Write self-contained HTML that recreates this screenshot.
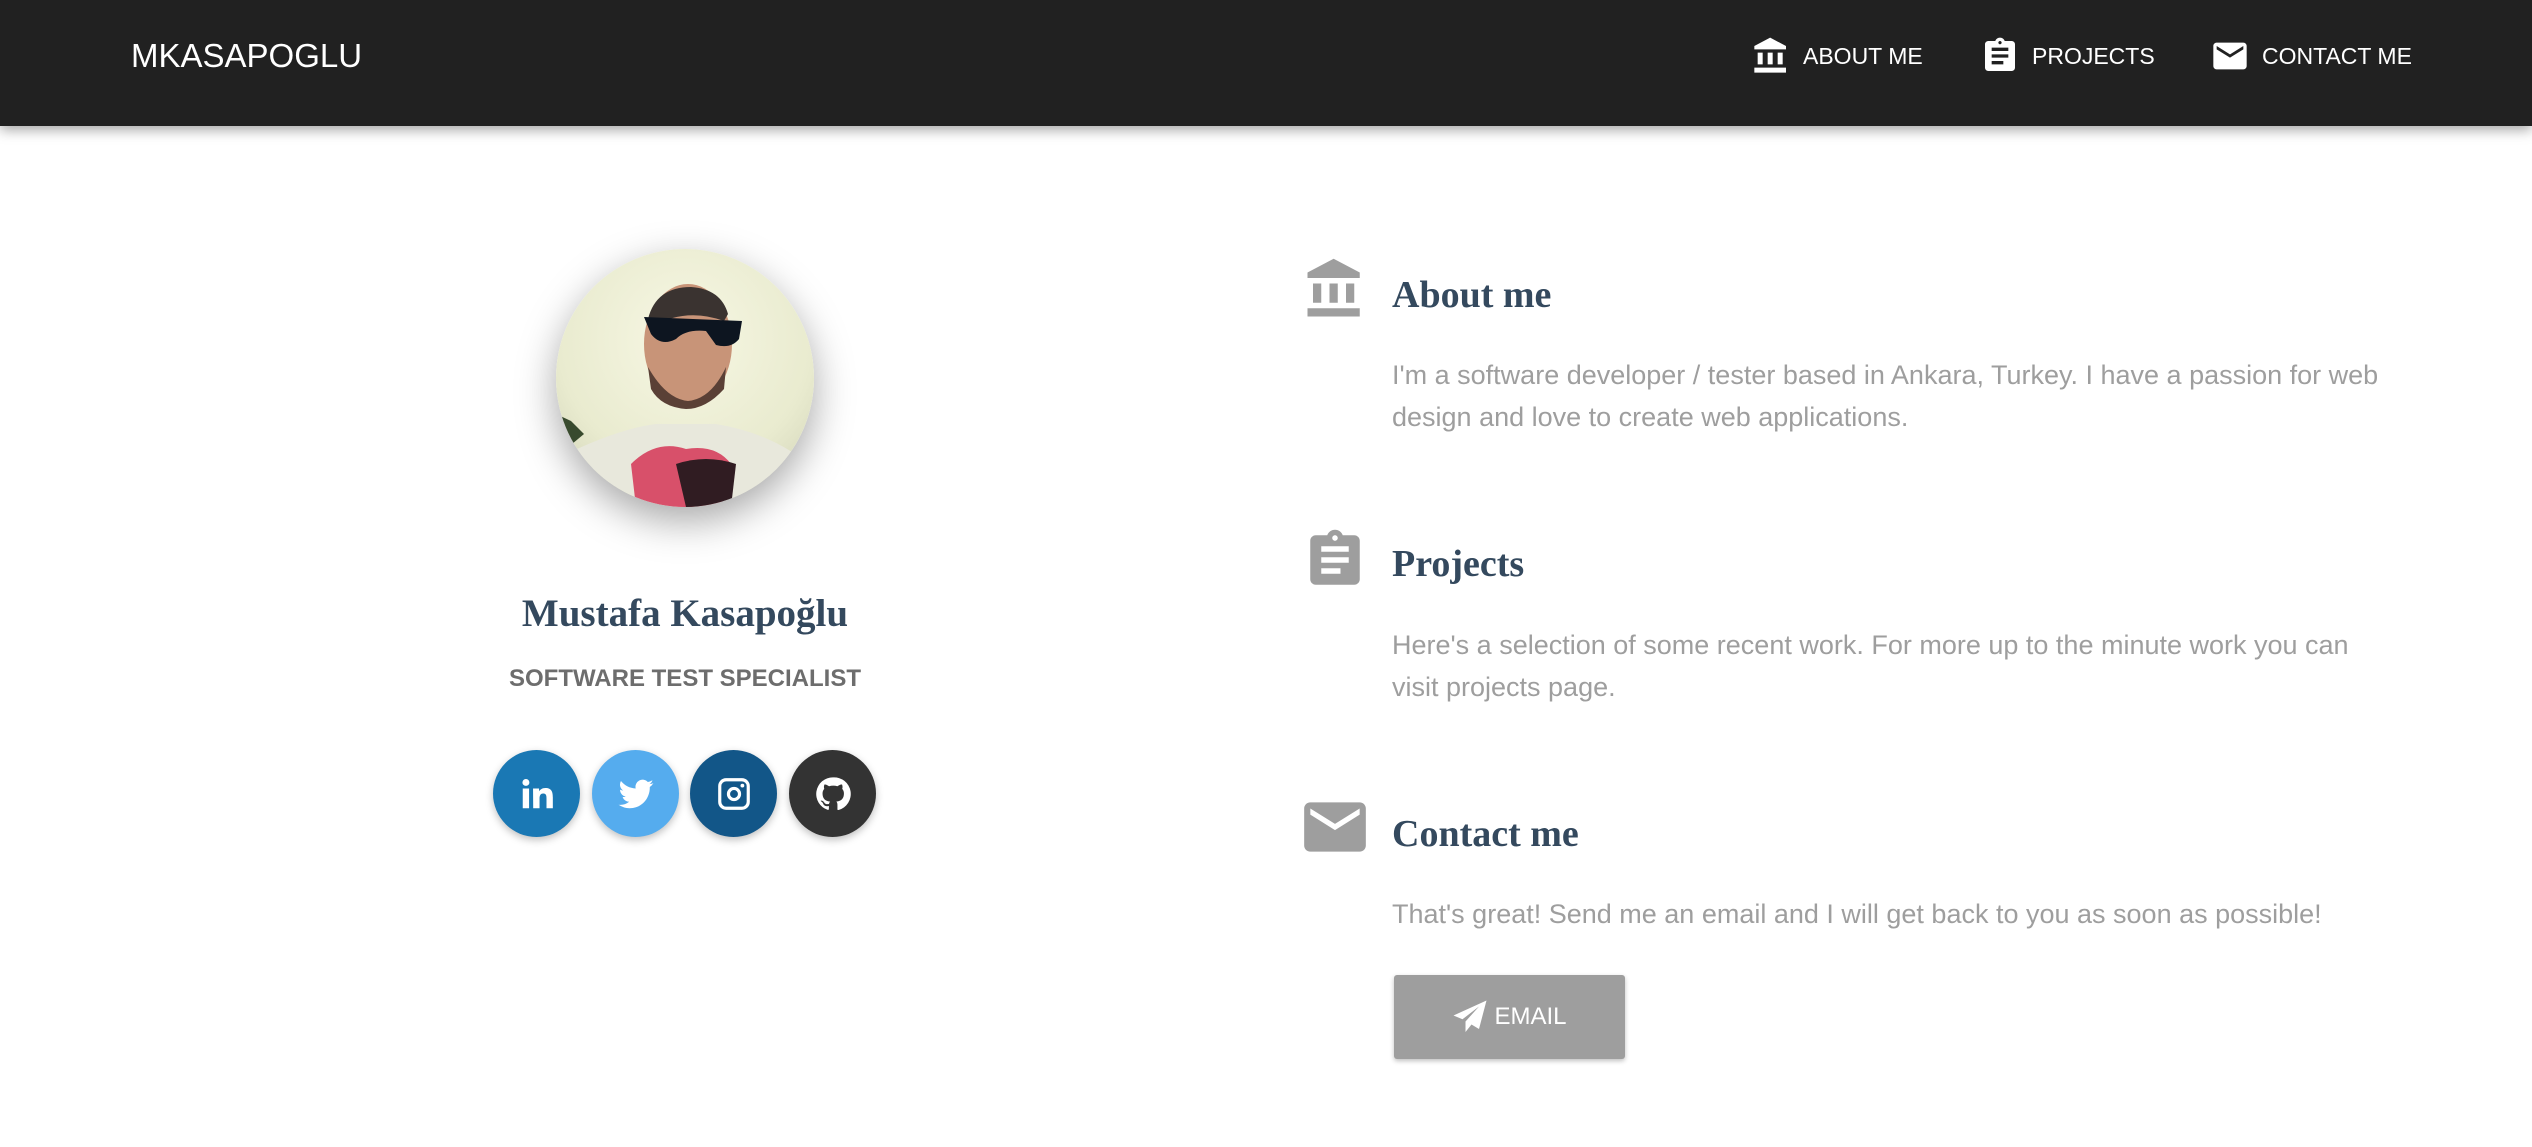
<!DOCTYPE html>
<html><head><meta charset="utf-8"><style>
*{margin:0;padding:0;box-sizing:border-box}
body{width:2532px;height:1147px;background:#fff;font-family:"Liberation Sans",sans-serif;position:relative;overflow:hidden}
.nav{position:absolute;left:0;top:0;width:2532px;height:126px;background:#212121;box-shadow:0 4px 12px rgba(0,0,0,.35)}
.logo{position:absolute;left:131px;top:37px;font-size:33px;color:#fff;font-weight:300;letter-spacing:0}
.ni{position:absolute;top:36px;color:#fff;font-size:23px;display:flex;align-items:center;height:40px}
.ni svg{width:40px;height:40px;margin-right:12px;fill:#fff}
.avatar{position:absolute;left:556px;top:249px;width:258px;height:258px;border-radius:50%;overflow:hidden;box-shadow:0 14px 40px rgba(0,0,0,.35);background:radial-gradient(circle at 50% 35%,#f7f7e4 0,#e9ebcf 60%,#c9cbb0 100%)}
.name{position:absolute;left:385px;width:600px;text-align:center;top:591px;font-family:"Liberation Serif",serif;font-weight:bold;font-size:39px;color:#34495e}
.sub{position:absolute;left:385px;width:600px;text-align:center;top:665px;font-weight:bold;font-size:24px;color:#6d6d6d}
.soc{position:absolute;top:750px;width:87px;height:87px;border-radius:50%;box-shadow:0 3px 8px rgba(0,0,0,.25);display:flex;align-items:center;justify-content:center}
.soc svg{width:38px;height:38px;fill:#fff}
.ic{position:absolute;left:1302px;width:66px;height:66px;fill:#9e9e9e}
.h{position:absolute;left:1392px;font-family:"Liberation Serif",serif;font-weight:bold;font-size:38px;color:#34495e}
.p{position:absolute;left:1392px;width:1040px;font-size:27px;line-height:42px;color:#9e9e9e;font-weight:300}
.btn{position:absolute;left:1394px;top:975px;width:231px;height:84px;background:#9e9e9e;border-radius:3px;box-shadow:0 2px 5px rgba(0,0,0,.25);color:#fff;font-size:24px;display:flex;align-items:center;justify-content:center}
</style></head><body>
<div class="nav">
<div class="logo">MKASAPOGLU</div>
<div class="ni" style="left:1751px"><svg viewBox="0 0 24 24"><path d="M4 10v7h3v-7H4zm6 0v7h3v-7h-3zM2 22h19v-3H2v3zm14-12v7h3v-7h-3zm-4.5-9L2 6v2h19V6l-9.5-5z"/></svg>ABOUT ME</div>
<div class="ni" style="left:1980px"><svg viewBox="0 0 24 24"><path d="M19 3h-4.18C14.4 1.84 13.3 1 12 1c-1.3 0-2.4.84-2.82 2H5c-1.1 0-2 .9-2 2v14c0 1.1.9 2 2 2h14c1.1 0 2-.9 2-2V5c0-1.1-.9-2-2-2zm-7 0c.55 0 1 .45 1 1s-.45 1-1 1-1-.45-1-1 .45-1 1-1zm2 14H7v-2h7v2zm3-4H7v-2h10v2zm0-4H7V7h10v2z"/></svg>PROJECTS</div>
<div class="ni" style="left:2210px"><svg viewBox="0 0 24 24"><path d="M20 4H4c-1.1 0-2 .9-2 2v12c0 1.1.9 2 2 2h16c1.1 0 2-.9 2-2V6c0-1.1-.9-2-2-2zm0 4l-8 5-8-5V6l8 5 8-5v2z"/></svg>CONTACT ME</div>
</div>

<div class="avatar"><svg width="258" height="258" viewBox="0 0 258 258">
<path d="M0 210 Q60 180 100 175 L160 175 Q220 185 258 220 L258 258 L0 258Z" fill="#e8e8dc"/>
<ellipse cx="132" cy="95" rx="44" ry="60" fill="#c89478"/>
<path d="M92 70 Q100 38 135 38 Q165 40 172 65 L168 72 Q130 58 95 78Z" fill="#3a3330"/>
<path d="M92 118 Q110 150 132 152 Q155 150 170 118 L168 140 Q150 160 130 160 Q105 158 95 140Z" fill="#5a4036"/>
<path d="M88 68 L186 72 L183 90 Q175 100 160 96 L150 82 Q130 80 120 90 Q105 98 95 85Z" fill="#0d1520"/>
<path d="M75 215 Q100 190 130 200 Q160 195 175 215 L165 258 L80 258Z" fill="#d8506a"/>
<path d="M120 215 Q150 205 180 215 L175 258 L130 258Z" fill="#301c22"/>
<path d="M0 165 L15 172 L28 185 L10 200 L0 198Z" fill="#384a2e"/>
</svg></div>
<div class="name">Mustafa Kasapoğlu</div>
<div class="sub">SOFTWARE TEST SPECIALIST</div>

<div class="soc" style="left:493px;background:#1a78b4"><svg viewBox="0 0 24 24"><path d="M3 8.5h4V21H3zM5 2.5a2.2 2.2 0 110 4.4 2.2 2.2 0 010-4.4zM9.5 8.5h3.8v1.8c.6-1 1.900-2.1 4-2.1 4 0 4.7 2.6 4.7 6V21h-4v-6c0-1.5 0-3.3-2-3.3s-2.4 1.600-2.4 3.2V21h-4z"/></svg></div>
<div class="soc" style="left:592px;background:#55acee"><svg viewBox="0 0 24 24"><path d="M23 5.1a9 9 0 01-2.6.7 4.5 4.5 0 002-2.5 9 9 0 01-2.9 1.1 4.5 4.5 0 00-7.7 4.1A12.8 12.8 0 012.5 3.8a4.5 4.5 0 001.4 6 4.5 4.5 0 01-2-.6 4.5 4.5 0 003.6 4.5 4.5 4.5 0 01-2 .1 4.5 4.5 0 004.2 3.1A9 9 0 011 18.8 12.8 12.8 0 007.9 21c8.3 0 12.8-6.9 12.8-12.8v-.6A9 9 0 0023 5.1z"/></svg></div>
<div class="soc" style="left:690px;background:#125688"><svg viewBox="0 0 24 24"><path d="M7 2h10a5 5 0 015 5v10a5 5 0 01-5 5H7a5 5 0 01-5-5V7a5 5 0 015-5zm0 2a3 3 0 00-3 3v10a3 3 0 003 3h10a3 3 0 003-3V7a3 3 0 00-3-3zm5 3.5a4.5 4.5 0 110 9 4.5 4.5 0 010-9zm0 2a2.5 2.5 0 100 5 2.5 2.5 0 000-5zM17.3 5.5a1.2 1.2 0 110 2.4 1.2 1.2 0 010-2.4z"/></svg></div>
<div class="soc" style="left:789px;background:#333"><svg viewBox="0 0 24 24"><path d="M12 1.5a10.5 10.5 0 00-3.3 20.5c.5.1.7-.2.7-.5v-1.9c-2.9.6-3.5-1.300-3.5-1.3-.5-1.2-1.2-1.5-1.2-1.5-1-.7.1-.6.1-.6 1 .1 1.6 1.1 1.6 1.1.9 1.6 2.5 1.1 3.1.9.1-.7.4-1.1.7-1.4-2.3-.3-4.8-1.2-4.8-5.2 0-1.1.4-2.1 1.1-2.8-.1-.3-.5-1.3.1-2.8 0 0 .9-.3 2.9 1.1a10 10 0 015.3 0c2-1.4 2.9-1.1 2.9-1.1.6 1.5.2 2.5.1 2.8.7.7 1.1 1.7 1.1 2.8 0 4-2.5 4.9-4.8 5.2.4.3.7 1 .7 1.9v2.9c0 .3.2.6.7.5A10.5 10.5 0 0012 1.5z"/></svg></div>

<svg class="ic" style="top:256px" viewBox="0 0 24 24"><path d="M4 10v7h3v-7H4zm6 0v7h3v-7h-3zM2 22h19v-3H2v3zm14-12v7h3v-7h-3zm-4.5-9L2 6v2h19V6l-9.5-5z"/></svg>
<div class="h" style="top:273px">About me</div>
<div class="p" style="top:354px">I'm a software developer / tester based in Ankara, Turkey. I have a passion for web<br>design and love to create web applications.</div>

<svg class="ic" style="top:527px" viewBox="0 0 24 24"><path d="M19 3h-4.18C14.4 1.84 13.3 1 12 1c-1.3 0-2.4.84-2.82 2H5c-1.1 0-2 .9-2 2v14c0 1.1.9 2 2 2h14c1.1 0 2-.9 2-2V5c0-1.1-.9-2-2-2zm-7 0c.55 0 1 .45 1 1s-.45 1-1 1-1-.45-1-1 .45-1 1-1zm2 14H7v-2h7v2zm3-4H7v-2h10v2zm0-4H7V7h10v2z"/></svg>
<div class="h" style="top:542px">Projects</div>
<div class="p" style="top:624px">Here's a selection of some recent work. For more up to the minute work you can<br>visit projects page.</div>

<svg class="ic" style="top:790px;left:1298px;width:74px;height:74px" viewBox="0 0 24 24"><path d="M20 4H4c-1.1 0-2 .9-2 2v12c0 1.1.9 2 2 2h16c1.1 0 2-.9 2-2V6c0-1.1-.9-2-2-2zm0 4l-8 5-8-5V6l8 5 8-5v2z"/></svg>
<div class="h" style="top:812px">Contact me</div>
<div class="p" style="top:893px">That's great! Send me an email and I will get back to you as soon as possible!</div>
<div class="btn"><svg width="36" height="36" viewBox="0 0 24 24" style="margin-right:6px"><path fill="#fff" d="M23 1L1 11l6 2.5L18 5 9 15v7l4-5 5 3z"/></svg>EMAIL</div>
</body></html>
